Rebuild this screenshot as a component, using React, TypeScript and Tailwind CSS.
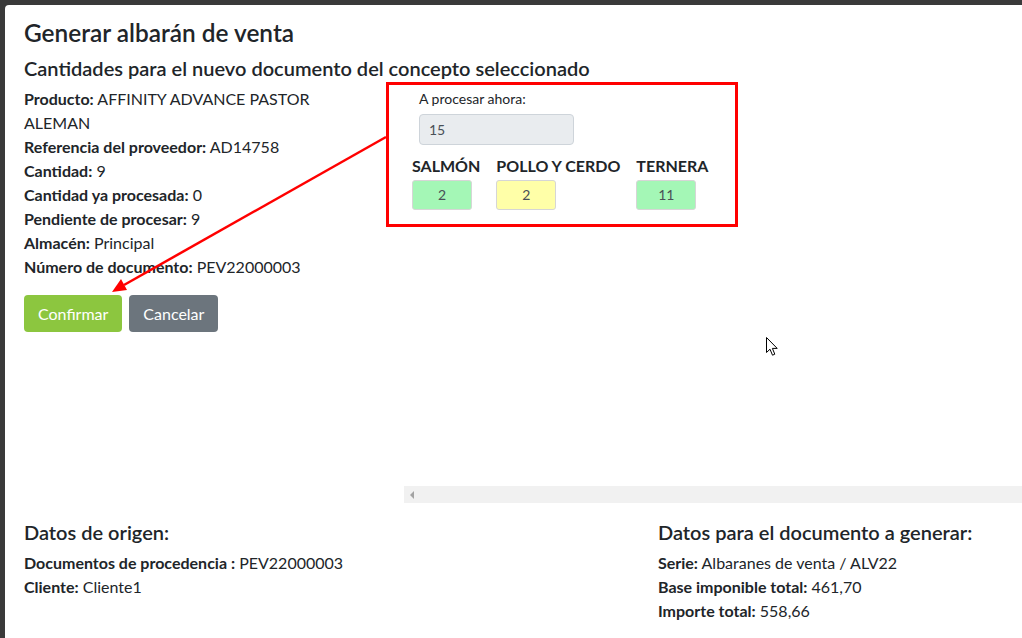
import React from "react";

function Line({ label, value }: { label: string; value: string }) {
  return (
    <div className="leading-[24px]">
      <span className="font-bold">{label}</span> {value}
    </div>
  );
}

export default function App() {
  return (
    <div
      className="relative w-[1022px] h-[638px] overflow-hidden bg-[#3a3a3a] pl-[5px] pt-[5px] text-[#212529]"
      style={{ fontFamily: "Lato, 'Noto Sans', sans-serif" }}
    >
      <div className="h-full w-full bg-white rounded-tl-[4px] pl-[19px] pt-[13px]">
        <h1 className="text-[24.4px] leading-[29px] font-semibold">Generar albarán de venta</h1>
        <h2 className="mt-[9px] text-[20px] leading-[24px] font-semibold">
          Cantidades para el nuevo documento del concepto seleccionado
        </h2>

        <div className="mt-[7px] flex">
          <div className="w-[380px] pr-[40px] text-[16px]">
            <div className="leading-[24px]">
              <span className="font-bold">Producto:</span> AFFINITY ADVANCE PASTOR
              <br />
              ALEMAN
            </div>
            <Line label="Referencia del proveedor:" value="AD14758" />
            <Line label="Cantidad:" value="9" />
            <Line label="Cantidad ya procesada:" value="0" />
            <Line label="Pendiente de procesar:" value="9" />
            <Line label="Almacén:" value="Principal" />
            <Line label="Número de documento:" value="PEV22000003" />
            <div className="mt-[16px] flex gap-[7px]">
              <button className="h-[37px] px-[14px] rounded-[4px] bg-[#8cc63f] text-white text-[16px]">
                Confirmar
              </button>
              <button className="h-[37px] px-[14px] rounded-[4px] bg-[#6c757d] text-white text-[16px]">
                Cancelar
              </button>
            </div>
          </div>

          <div className="flex-1 h-[416px] flex flex-col">
            <div className="flex-1 pt-[4px]">
              <div className="pl-[15px] text-[14px] leading-[16px]">A procesar ahora:</div>
              <div className="pl-[15px] mt-[7px]">
                <div className="w-[155px] h-[31px] rounded-[4px] border border-[#ced4da] bg-[#e9ecef] pl-[9px] text-[14px] leading-[29px] text-[#495057]">
                  15
                </div>
              </div>
              <div className="mt-[13px] pl-[8px] flex gap-[16px]">
                {[
                  { name: "SALMÓN", v: "2", c: "bg-[#a4f7b6]" },
                  { name: "POLLO Y CERDO", v: "2", c: "bg-[#ffffa8]" },
                  { name: "TERNERA", v: "11", c: "bg-[#a4f7b6]" },
                ].map((f) => (
                  <div key={f.name} className="flex flex-col">
                    <div className="text-[16px] leading-[16px] font-bold">{f.name}</div>
                    <div
                      className={`mt-[6px] w-[60px] h-[30px] rounded-[3px] border border-[#d6d6d6] ${f.c} text-center text-[14px] leading-[28px] text-[#495057]`}
                    >
                      {f.v}
                    </div>
                  </div>
                ))}
              </div>
            </div>
            <div className="h-[17px] bg-[#f1f1f1] flex items-center pl-[5px]">
              <svg width="6" height="8" viewBox="0 0 6 8">
                <polygon points="5,0 5,8 1,4" fill="#a3a3a3" />
              </svg>
            </div>
          </div>
        </div>

        <div className="mt-[17px] flex">
          <div className="w-[634px]">
            <h3 className="text-[20px] leading-[24px] font-semibold">Datos de origen:</h3>
            <div className="mt-[7px] text-[16px]">
              <Line label="Documentos de procedencia :" value="PEV22000003" />
              <Line label="Cliente:" value="Cliente1" />
            </div>
          </div>
          <div className="flex-1">
            <h3 className="text-[20px] leading-[24px] font-semibold">Datos para el documento a generar:</h3>
            <div className="mt-[7px] text-[16px]">
              <Line label="Serie:" value="Albaranes de venta / ALV22" />
              <Line label="Base imponible total:" value="461,70" />
              <Line label="Importe total:" value="558,66" />
            </div>
          </div>
        </div>
      </div>

      {/* annotation: red box */}
      <div className="absolute left-[386px] top-[82px] w-[352px] h-[145px] border-[3px] border-[#ff0000]" />
      {/* annotation: arrow */}
      <svg className="absolute left-0 top-0" width="1022" height="638" viewBox="0 0 1022 638">
        <line x1="386" y1="137" x2="124" y2="285" stroke="#ff0000" strokeWidth="2.5" />
        <polygon points="112,292 121,279 127,290" fill="#ff0000" />
      </svg>
      {/* mouse cursor */}
      <svg className="absolute left-[766px] top-[337px]" width="13" height="20" viewBox="0 0 13 20">
        <path
          d="M0.5 0.5 L0.5 15.5 L4 12.2 L6.5 18.2 L8.8 17.2 L6.4 11.4 L11.2 11.4 Z"
          fill="white"
          stroke="black"
          strokeWidth="1"
          strokeLinejoin="miter"
        />
      </svg>
    </div>
  );
}
